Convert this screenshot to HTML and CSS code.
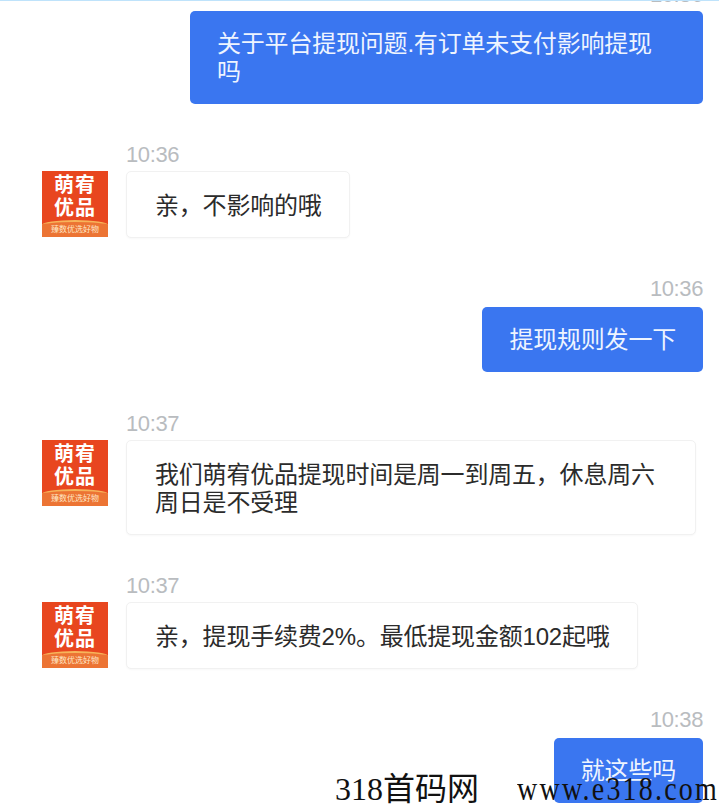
FILE: index.html
```html
<!DOCTYPE html>
<html lang="zh-CN">
<head>
  <meta charset="UTF-8" />
  <title>318首码网</title>
  <link rel="stylesheet" href="styles.css">
</head>
<body>
  <main class="chat">
    <div class="msg msg-right msg-first">
      <div class="time time-clipped">10:36</div>
      <div class="bubble bubble-blue bubble-long">关于平台提现问题.有订单未支付影响提现吗</div>
    </div>

    <div class="msg msg-left msg-a">
      <div class="avatar">
        <div class="avatar-name">萌宥<br>优品</div>
        <div class="avatar-strip">臻数优选好物</div>
      </div>
      <div class="msg-body">
        <div class="time">10:36</div>
        <div class="bubble bubble-white">亲，不影响的哦</div>
      </div>
    </div>

    <div class="msg msg-right msg-b">
      <div class="time">10:36</div>
      <div class="bubble bubble-blue">提现规则发一下</div>
    </div>

    <div class="msg msg-left msg-c">
      <div class="avatar">
        <div class="avatar-name">萌宥<br>优品</div>
        <div class="avatar-strip">臻数优选好物</div>
      </div>
      <div class="msg-body">
        <div class="time">10:37</div>
        <div class="bubble bubble-white bubble-wide">我们萌宥优品提现时间是周一到周五，休息周六周日是不受理</div>
      </div>
    </div>

    <div class="msg msg-left msg-d">
      <div class="avatar">
        <div class="avatar-name">萌宥<br>优品</div>
        <div class="avatar-strip">臻数优选好物</div>
      </div>
      <div class="msg-body">
        <div class="time">10:37</div>
        <div class="bubble bubble-white">亲，提现手续费2%。最低提现金额102起哦</div>
      </div>
    </div>

    <div class="msg msg-right msg-e">
      <div class="time">10:38</div>
      <div class="bubble bubble-blue">就这些吗</div>
    </div>
  </main>

  <div class="watermark">
    <span class="wm-name">318首码网</span>
    <span class="wm-url">www.e318.com</span>
  </div>
</body>
</html>
```

FILE: styles.css
```css
* {
  margin: 0;
  padding: 0;
  box-sizing: border-box;
}
html, body {
  height: 804px;
  overflow: hidden;
}
body {
  position: relative;
  background: #fff;
  border-top: 1px solid #bfe3fb;
  font-family: "Liberation Sans", "Noto Sans CJK SC", sans-serif;
  color: #222;
}
.chat {
  display: flex;
  flex-direction: column;
  padding: 0 16px 0 42px;
}
.msg-right {
  display: flex;
  flex-direction: column;
  align-items: flex-end;
}
.msg-left {
  display: flex;
  align-items: flex-start;
  gap: 18px;
}
.msg-first { margin-top: -18px; }
.msg-a { margin-top: 39px; }
.msg-b { margin-top: 39px; }
.msg-c { margin-top: 40px; }
.msg-d { margin-top: 39px; }
.msg-e { margin-top: 39px; }

.msg-left .avatar { margin-top: 28px; }
.msg-body {
  display: flex;
  flex-direction: column;
  align-items: flex-start;
  flex: 1;
  min-width: 0;
}
.time {
  height: 24px;
  font-size: 22px;
  line-height: 24px;
  letter-spacing: -0.4px;
  color: #b9bcbf;
}
.msg-left .time { margin-bottom: 4px; }
.msg-right .time { margin-bottom: 6px; }
.msg-right .time-clipped { margin-bottom: 4px; }
.bubble {
  font-size: 24px;
  line-height: 28px;
  letter-spacing: -0.2px;
  border-radius: 5px;
}
.bubble-blue {
  background: #3a76f0;
  color: #eef4ff;
  padding: 19px 27px 18px 27px;
}
.bubble-long {
  width: 513px;
  padding-right: 50px;
}
.bubble-white {
  background: #fff;
  color: #2b2b2b;
  border: 1px solid #f1f1f1;
  box-shadow: 0 1px 2px rgba(0,0,0,0.03);
  padding: 20px 27px 17px 28px;
}
.bubble-wide {
  width: 570px;
}
.avatar {
  flex: none;
  width: 66px;
  height: 66px;
  display: flex;
  flex-direction: column;
  align-items: center;
  overflow: hidden;
  background: #e8461f;
  color: #fff;
}
.avatar-name {
  flex: 1;
  padding-top: 3px;
  font-size: 20px;
  line-height: 23px;
  letter-spacing: 1px;
  font-weight: 700;
  text-align: center;
}
.avatar-strip {
  width: 100%;
  height: 17px;
  border-top: 2px solid #f7b45a;
  border-radius: 50% 50% 0 0 / 5px 5px 0 0;
  background: #ec7434;
  color: #ffe6c4;
  font-size: 8px;
  line-height: 15px;
  text-align: center;
  white-space: nowrap;
}
.watermark {
  position: absolute;
  left: 335px;
  bottom: 0;
  width: 384px;
  height: 30px;
  display: flex;
  justify-content: space-between;
  align-items: center;
  color: #111;
  white-space: nowrap;
}
.wm-name {
  font-family: "Liberation Serif", "Noto Sans CJK SC", serif;
  font-size: 32px;
  line-height: 30px;
}
.wm-url {
  display: inline-block;
  font-family: "Liberation Serif", serif;
  font-size: 28px;
  line-height: 30px;
  letter-spacing: 2.2px;
  transform: scaleY(1.2);
}
```
